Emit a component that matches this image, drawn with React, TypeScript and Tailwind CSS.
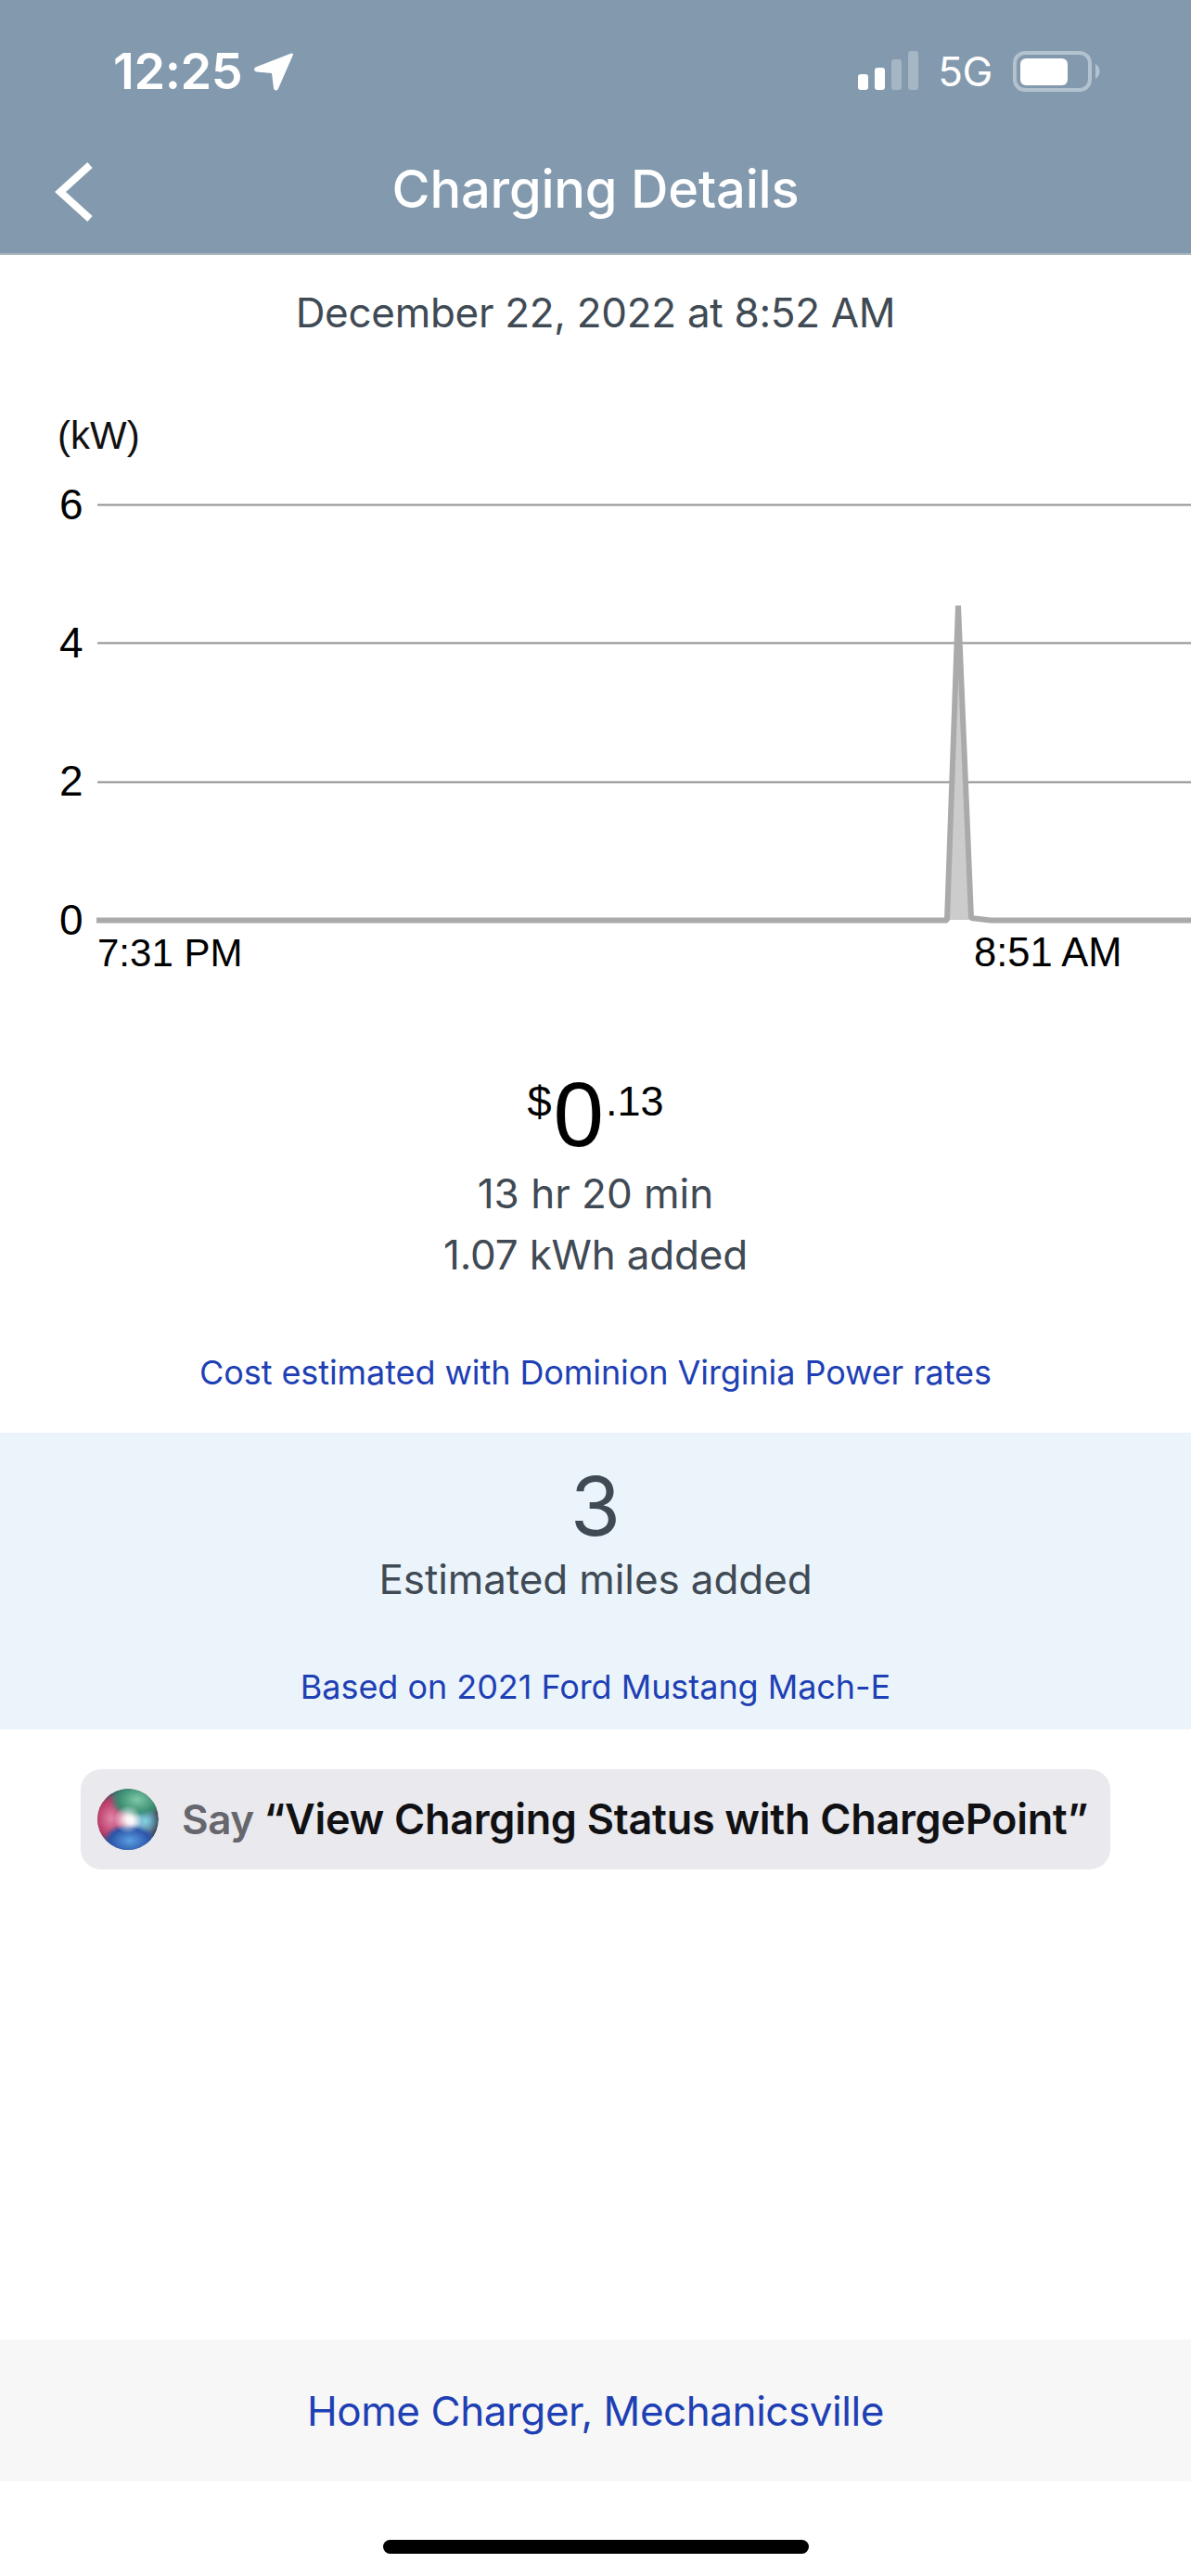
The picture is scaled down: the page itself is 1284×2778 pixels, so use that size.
export default function App() {
  const ui = "font-['Inter','Noto_Sans',sans-serif]";
  const hel = "font-['Liberation_Sans',Arial,sans-serif]";
  return (
    <div className={`w-[1284px] h-[2778px] bg-white flex flex-col overflow-hidden ${ui}`}>
      <header className="h-[275px] shrink-0 bg-[#8299ae] border-b-2 border-[#a9b5bf] flex flex-col">
        <div className="h-[152px] flex items-start justify-between pl-[122px] pr-[98px] pt-[47px] text-white">
          <div className="flex items-center gap-[12px] h-[60px]">
            <span className="text-[54px] leading-[60px] font-semibold tracking-[-0.4px]">12:25</span>
            <svg width="44" height="44" viewBox="0 0 44 44" className="fill-white">
              <path d="M41 2.5 C42.5 2 43.5 3.3 42.8 4.6 L27 40.5 C25.7 43.5 22.5 43 22 40 L20 24 L4 22.5 C0.5 22 0.3 18.5 3 17.3 Z" />
            </svg>
          </div>
          <div className="flex items-center h-[60px]">
            <svg width="66" height="42" viewBox="0 0 66 42" className="mt-[-2px]">
              <rect x="0" y="25" width="11" height="17" rx="3" fill="#ffffff" />
              <rect x="18" y="18" width="11" height="24" rx="3" fill="#ffffff" />
              <rect x="36" y="9" width="11" height="33" rx="3" fill="#a5b6c5" />
              <rect x="54" y="0" width="11" height="42" rx="3" fill="#a5b6c5" />
            </svg>
            <span className="ml-[20px] text-[44px] leading-[60px] tracking-[-0.4px] font-normal">5G</span>
            <svg width="94" height="44" viewBox="0 0 94 44" className="ml-[22px]">
              <rect x="2" y="2" width="81" height="40" rx="11" fill="none" stroke="#b3c2cf" strokeWidth="4" />
              <rect x="8" y="8" width="51" height="29" rx="6" fill="#ffffff" />
              <path d="M89 14 C92.5 16 93.5 19 93.5 22 C93.5 25 92.5 28 89 30 Z" fill="#b3c2cf" />
            </svg>
          </div>
        </div>
        <div className="relative flex-1 flex items-start justify-center">
          <svg width="44" height="64" viewBox="0 0 44 64" className="absolute left-[58px] top-[23px]" fill="none" stroke="#ffffff" strokeWidth="8">
            <path d="M39 3 L7 32 L39 61" />
          </svg>
          <h1 className="text-[56px] leading-[62px] font-medium text-white tracking-[-0.2px] mt-[21px]">Charging Details</h1>
        </div>
      </header>

      <div className="h-[123px] shrink-0 flex items-center justify-center text-[#3f4a54] text-[44px] tracking-[-0.3px]">
        December 22, 2022 at 8:52 AM
      </div>

      <svg width="1284" height="702" viewBox="0 398 1284 702" className={`block shrink-0 ${hel}`}>
        <text x="62" y="484" fontSize="42" fill="#111111">(kW)</text>
        <text x="64" y="560" fontSize="46" fill="#000000">6</text>
        <text x="64" y="709" fontSize="46" fill="#000000">4</text>
        <text x="64" y="858" fontSize="46" fill="#000000">2</text>
        <text x="64" y="1008" fontSize="46" fill="#000000">0</text>
        <line x1="105" x2="1284" y1="544.5" y2="544.5" stroke="#8f8f8f" strokeWidth="2" />
        <line x1="105" x2="1284" y1="693.5" y2="693.5" stroke="#8f8f8f" strokeWidth="2" />
        <line x1="105" x2="1284" y1="843.5" y2="843.5" stroke="#8f8f8f" strokeWidth="2" />
        <path d="M1021 992 L1033 655 L1047 992 Z" fill="#cccccc" />
        <path d="M104 992.5 L1021 992.5 L1033 653 L1047 990 L1068 992.5 L1284 992.5" fill="none" stroke="#aaaaaa" strokeWidth="6" strokeLinejoin="bevel" />
        <text x="105" y="1042" fontSize="42" fill="#000000">7:31 PM</text>
        <text x="1050" y="1042" fontSize="43.5" fill="#000000">8:51 AM</text>
      </svg>

      <div className="h-[445px] shrink-0 flex flex-col items-center pt-[54px]">
        <div className={`flex items-start justify-center h-[90px] text-black ${hel}`}>
          <span className="text-[47px] leading-[50px] mt-[9px]">$</span>
          <span className="text-[98px] leading-[96px] mx-[2px]">0</span>
          <span className="text-[45px] leading-[50px] mt-[9px]">.13</span>
        </div>
        <div className="mt-[10px] h-[66px] flex items-center text-[44px] text-[#3f4a54]">13 hr 20 min</div>
        <div className="h-[66px] flex items-center text-[44px] text-[#3f4a54] tracking-[-0.2px]">1.07 kWh added</div>
        <div className="mt-[64px] h-[60px] flex items-center text-[36px] text-[#1e40b4] tracking-[-0.08px]">Cost estimated with Dominion Virginia Power rates</div>
      </div>

      <div className="h-[320px] shrink-0 bg-[#ecf4fb] flex flex-col items-center">
        <div className="mt-[29px] h-[100px] flex items-center text-[88px] text-[#3f4a54]">3</div>
        <div className="mt-[-1px] h-[60px] flex items-center text-[44px] text-[#3f4a54] tracking-[-0.1px]">Estimated miles added</div>
        <div className="mt-[56px] h-[60px] flex items-center text-[36px] text-[#1e40b4] tracking-[-0.05px]">Based on 2021 Ford Mustang Mach-E</div>
      </div>

      <div className="flex-1 flex flex-col items-center pt-[43px]">
        <div className="w-[1110px] h-[108px] bg-[#e9e9ee] rounded-[22px] flex items-center pl-[17px] gap-[24px]">
          <svg width="68" height="68" viewBox="0 0 68 68" className="shrink-0">
            <defs>
              <radialGradient id="orbBase" cx="50%" cy="50%" r="50%">
                <stop offset="0%" stopColor="#ffffff" />
                <stop offset="22%" stopColor="#d9dbe8" />
                <stop offset="70%" stopColor="#7d8aa0" />
                <stop offset="100%" stopColor="#3b4655" />
              </radialGradient>
              <radialGradient id="orbPink" cx="50%" cy="50%" r="50%">
                <stop offset="0%" stopColor="#e284a8" />
                <stop offset="70%" stopColor="#b93c68" />
                <stop offset="100%" stopColor="#b93c68" stopOpacity="0" />
              </radialGradient>
              <radialGradient id="orbGreen" cx="50%" cy="50%" r="50%">
                <stop offset="0%" stopColor="#7cc9a8" />
                <stop offset="70%" stopColor="#3a8a70" />
                <stop offset="100%" stopColor="#3a8a70" stopOpacity="0" />
              </radialGradient>
              <radialGradient id="orbBlue" cx="50%" cy="50%" r="50%">
                <stop offset="0%" stopColor="#5a9fe2" />
                <stop offset="70%" stopColor="#2c55a8" />
                <stop offset="100%" stopColor="#2c55a8" stopOpacity="0" />
              </radialGradient>
              <radialGradient id="orbCyan" cx="50%" cy="50%" r="50%">
                <stop offset="0%" stopColor="#7fd4e6" />
                <stop offset="100%" stopColor="#3ea5c4" stopOpacity="0" />
              </radialGradient>
              <radialGradient id="orbCore" cx="50%" cy="50%" r="50%">
                <stop offset="0%" stopColor="#ffffff" />
                <stop offset="30%" stopColor="#ffffff" stopOpacity="0.8" />
                <stop offset="100%" stopColor="#ffffff" stopOpacity="0" />
              </radialGradient>
              <clipPath id="orbClip"><circle cx="34" cy="34" r="33" /></clipPath>
            </defs>
            <g clipPath="url(#orbClip)">
              <circle cx="34" cy="34" r="33" fill="url(#orbBase)" />
              <ellipse cx="16" cy="33" rx="22" ry="27" fill="url(#orbPink)" />
              <ellipse cx="44" cy="13" rx="30" ry="21" fill="url(#orbGreen)" />
              <ellipse cx="36" cy="57" rx="30" ry="19" fill="url(#orbBlue)" />
              <ellipse cx="53" cy="36" rx="15" ry="13" fill="url(#orbCyan)" />
              <circle cx="34" cy="34" r="15" fill="url(#orbCore)" />
            </g>
          </svg>
          <p className="text-[44px] leading-[60px] font-semibold text-[#66666c] tracking-[-0.4px] whitespace-nowrap">
            Say <span className="text-[#111114] text-[45px] tracking-[-0.3px]">“View Charging Status with ChargePoint”</span>
          </p>
        </div>
      </div>

      <div className="h-[153px] shrink-0 bg-[#f7f7f7] flex items-center justify-center text-[44px] tracking-[-0.45px] text-[#1e40b4]">
        Home Charger, Mechanicsville
      </div>
      <div className="h-[102px] shrink-0 flex justify-center pt-[63px]">
        <div className="w-[459px] h-[15px] bg-black rounded-full" />
      </div>
    </div>
  );
}
